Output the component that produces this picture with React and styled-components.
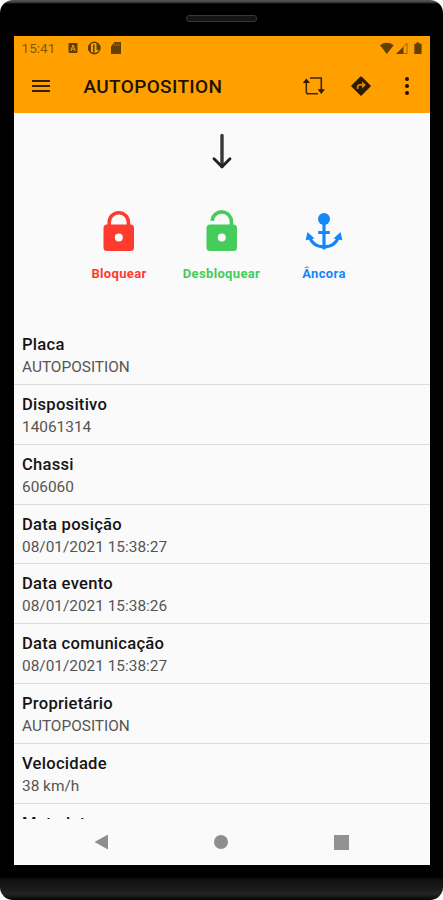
import styled, {createGlobalStyle} from 'styled-components';

const rows = [
  {label: 'Placa', value: 'AUTOPOSITION'},
  {label: 'Dispositivo', value: '14061314'},
  {label: 'Chassi', value: '606060'},
  {label: 'Data posição', value: '08/01/2021 15:38:27'},
  {label: 'Data evento', value: '08/01/2021 15:38:26'},
  {label: 'Data comunicação', value: '08/01/2021 15:38:27'},
  {label: 'Proprietário', value: 'AUTOPOSITION'},
  {label: 'Velocidade', value: '38 km/h'},
  {label: 'Metadata', value: ''},
];

const LockIcon = ({open}) => (
  <svg width="32" height="42" viewBox="0 0 32 42" fill="none">
    <path
      d={open ? 'M6.2 10.8A9.5 9.5 0 0 1 25.4 12.3V17' : 'M6.2 17V12.3a9.6 9.6 0 0 1 19.2 0V17'}
      stroke="currentColor"
      strokeWidth="3.6"
    />
    <path
      fill="currentColor"
      fillRule="evenodd"
      d="M4 14.5h23.5a3.5 3.5 0 0 1 3.5 3.5v19.5a3.5 3.5 0 0 1-3.5 3.5H4a3.5 3.5 0 0 1-3.5-3.5V18A3.5 3.5 0 0 1 4 14.5zm11.8 9.1a4 4 0 1 0 0 8 4 4 0 0 0 0-8z"
    />
  </svg>
);

const AnchorIcon = () => (
  <svg width="38" height="38" viewBox="0 0 38 38" fill="none">
    <circle cx="19" cy="7" r="6" fill="currentColor" />
    <path
      d="M19 6v30M13.2 20.5h11.6M4 24C6.5 31 12 34.8 19 34.8S31.5 31 34 24"
      stroke="currentColor"
      strokeWidth="3.2"
    />
    <path
      fill="currentColor"
      d="M2.5 20 9.5 26.5.6 28.3zM35.5 20 28.5 26.5 37.4 28.3zM16 35h6l-3 3z"
    />
  </svg>
);

const RepeatIcon = () => (
  <svg width="24" height="22" viewBox="0 0 24 22" fill="none">
    <path
      d="M8 3h11.3V15M4.3 6v10.8a2 2 0 0 0 2 2H16"
      stroke="#3d2900"
      strokeWidth="1.6"
    />
    <path fill="#2b1c00" d="M4.3 3.5 8 8H.8zM19.3 19l-3.7-4.7h7.4z" />
  </svg>
);

const DirectionsIcon = () => (
  <svg width="20" height="20" viewBox="0 0 20 20">
    <path fill="#2b1b00" d="M10 .4a1 1 0 0 1 .8.3l8.500 8.500a1 1 0 0 1 0 1.600l-8.500 8.500a1 1 0 0 1-1.600 0L.7 10.800a1 1 0 0 1 0-1.600L9.200.7a1 1 0 0 1 .8-.3z" />
    <path d="M6.700 13V10.800a2 2 0 0 1 2-2h3" fill="none" stroke="#d98800" strokeWidth="1.8" />
    <path fill="#d98800" d="m11 5.500 4 3.500-4 3.500z" />
  </svg>
);

const ArrowIcon = () => (
  <svg width="22" height="36" viewBox="0 0 22 36" fill="none" strokeLinecap="round">
    <path d="M11 2.500v31" stroke="#383838" strokeWidth="3.4" />
    <path d="m3 25.800 8 8 8-8" stroke="#222" strokeWidth="2.9" strokeLinejoin="round" />
  </svg>
);

const Notifications = () => (
  <svg width="56" height="14" viewBox="0 0 56 14">
    <rect x="1.5" y="2" width="9" height="10" rx="1" fill="#614000" />
    <path d="m3.700 10 2.300-6 2.300 6M4.500 8.200h3" fill="none" stroke="#ffa000" strokeWidth="1" />
    <circle cx="27.3" cy="7" r="5.700" fill="none" stroke="#614000" strokeWidth="1.4" />
    <path fill="#614000" d="M21.500 4.500 24 2.500v9l-2.500-2zM26 3.500h1.500v8.500H26zM29.500 2h1.500l2 3v4h-3.500z" />
    <path fill="#614000" d="M44 5.500 47.500 1H54v12H44z" />
    <path d="M47.500 5V2.500M50 5V2.500M52 5V2.500" stroke="#c07a00" strokeWidth=".8" />
  </svg>
);

const Signals = () => (
  <svg width="43" height="13" viewBox="0 0 43 13">
    <path fill="#614000" d="M0 3.200C4-.1 9.500-.1 13.600 3.200L6.800 12z" />
    <path fill="#614000" d="M16 12 23.500 4.500V12z" />
    <path d="M23.500 4.500 27 1.200v10.300h-3.500" fill="none" stroke="#8f5d00" strokeWidth=".9" />
    <path fill="#614000" d="M34.300 1.800h2V.5h3v1.300h2.300V12h-7.300z" />
  </svg>
);

const App = () => {
  return (
    <Phone>
      <GlobalStyle />
      <Speaker />
      <Screen>
        <StatusBar>
          <Clock>15:41</Clock>
          <Notifications />
          <SignalWrap>
            <Signals />
          </SignalWrap>
        </StatusBar>
        <Toolbar>
          <Burger>
            <Line />
            <Line />
            <Line />
          </Burger>
          <Heading>AUTOPOSITION</Heading>
          <ToolbarActions>
            <RepeatIcon />
            <DirectionsIcon />
            <More>
              <Dot />
              <Dot />
              <Dot />
            </More>
          </ToolbarActions>
        </Toolbar>
        <Content>
          <ArrowWrap>
            <ArrowIcon />
          </ArrowWrap>
          <Actions>
            <Action $color="#fd3b2f">
              <IconBox>
                <LockIcon />
              </IconBox>
              Bloquear
            </Action>
            <Action $color="#46cc5a">
              <IconBox>
                <LockIcon open />
              </IconBox>
              Desbloquear
            </Action>
            <Action $color="#1687fb">
              <IconBox>
                <AnchorIcon />
              </IconBox>
              Âncora
            </Action>
          </Actions>
          {rows.map(el => (
            <Row key={el.label}>
              <Label>{el.label}</Label>
              <Value>{el.value}</Value>
            </Row>
          ))}
        </Content>
        <NavBar>
          <svg width="14" height="16" viewBox="0 0 14 16">
            <path fill="#8e8e8e" d="M14 .5v15L.5 8z" />
          </svg>
          <Home />
          <Recent />
        </NavBar>
      </Screen>
    </Phone>
  );
};

export default App;

const GlobalStyle = createGlobalStyle`
  body {
    margin: 0;
    background: #fff;
  }
  * {
    box-sizing: border-box;
  }
  svg {
    display: block;
    flex-shrink: 0;
  }
`;

const Phone = styled.div`
  width: 443px;
  height: 900px;
  display: flex;
  flex-direction: column;
  align-items: center;
  overflow: hidden;
  border-radius: 13px;
  background: linear-gradient(#555 0, #454545 2px, #000 4px, #000 877px, #111 880px, #151515 885px, #242424 894px, #111 898px, #000 900px);
  font-family: Roboto, sans-serif;
`;

const Speaker = styled.div`
  width: 71px;
  height: 7px;
  margin: 15px 0 14px;
  border: 1px solid #373737;
  border-radius: 3px;
  background: #151515;
`;

const Screen = styled.div`
  width: 416px;
  height: 829px;
  display: flex;
  flex-direction: column;
  background: #fafafa;
`;

const StatusBar = styled.div`
  height: 24px;
  display: flex;
  align-items: center;
  padding-left: 8px;
  background: #ffa000;
`;

const Clock = styled.div`
  width: 45px;
  font-size: 13.6px;
  color: #855800;
`;

const SignalWrap = styled.div`
  margin-left: auto;
  padding-right: 7px;
`;

const Toolbar = styled.div`
  height: 53px;
  display: flex;
  align-items: center;
  padding: 0 21px 1px 18px;
  background: #ffa000;
`;

const Burger = styled.div`
  width: 18px;
  display: flex;
  flex-direction: column;
  gap: 3px;
`;

const Line = styled.div`
  height: 2px;
  background: #332000;
`;

const Heading = styled.div`
  margin-left: 34px;
  padding-top: 1px;
  font-size: 19px;
  font-weight: 500;
  letter-spacing: 0.35px;
  color: #1c1200;
`;

const ToolbarActions = styled.div`
  margin-left: auto;
  display: flex;
  align-items: center;
  gap: 25px;
`;

const More = styled.div`
  width: 4px;
  margin-left: 9px;
  display: flex;
  flex-direction: column;
  gap: 3px;
`;

const Dot = styled.div`
  width: 4px;
  height: 4px;
  border-radius: 50%;
  background: #1c1200;
`;

const Content = styled.div`
  height: 706px;
  overflow: hidden;
`;

const ArrowWrap = styled.div`
  display: flex;
  justify-content: center;
  padding-top: 20px;
`;

const Actions = styled.div`
  display: grid;
  grid-template-columns: repeat(3, 102.5px);
  justify-content: center;
  height: 156px;
  padding-top: 41px;
`;

const Action = styled.div`
  display: flex;
  flex-direction: column;
  align-items: center;
  font-size: 13px;
  font-weight: 700;
  line-height: 16px;
  letter-spacing: 0.35px;
  color: ${({$color}) => $color};
`;

const IconBox = styled.div`
  height: 42px;
  display: flex;
  align-items: center;
  margin-bottom: 14px;
`;

const Row = styled.div`
  height: 59.85px;
  padding: 9px 8.5px 0;
  border-bottom: 1px solid #dcdcdc;
`;

const Label = styled.div`
  font-size: 16.6px;
  font-weight: 500;
  line-height: 22px;
  letter-spacing: 0.25px;
  color: #151515;
`;

const Value = styled.div`
  font-size: 15.4px;
  line-height: 22px;
  color: #555;
`;

const NavBar = styled.div`
  flex: 1;
  display: flex;
  justify-content: center;
  align-items: center;
  gap: 106px;
`;

const Home = styled.div`
  width: 14px;
  height: 14px;
  border-radius: 50%;
  background: #8e8e8e;
`;

const Recent = styled.div`
  width: 15px;
  height: 15px;
  background: #929292;
`;
